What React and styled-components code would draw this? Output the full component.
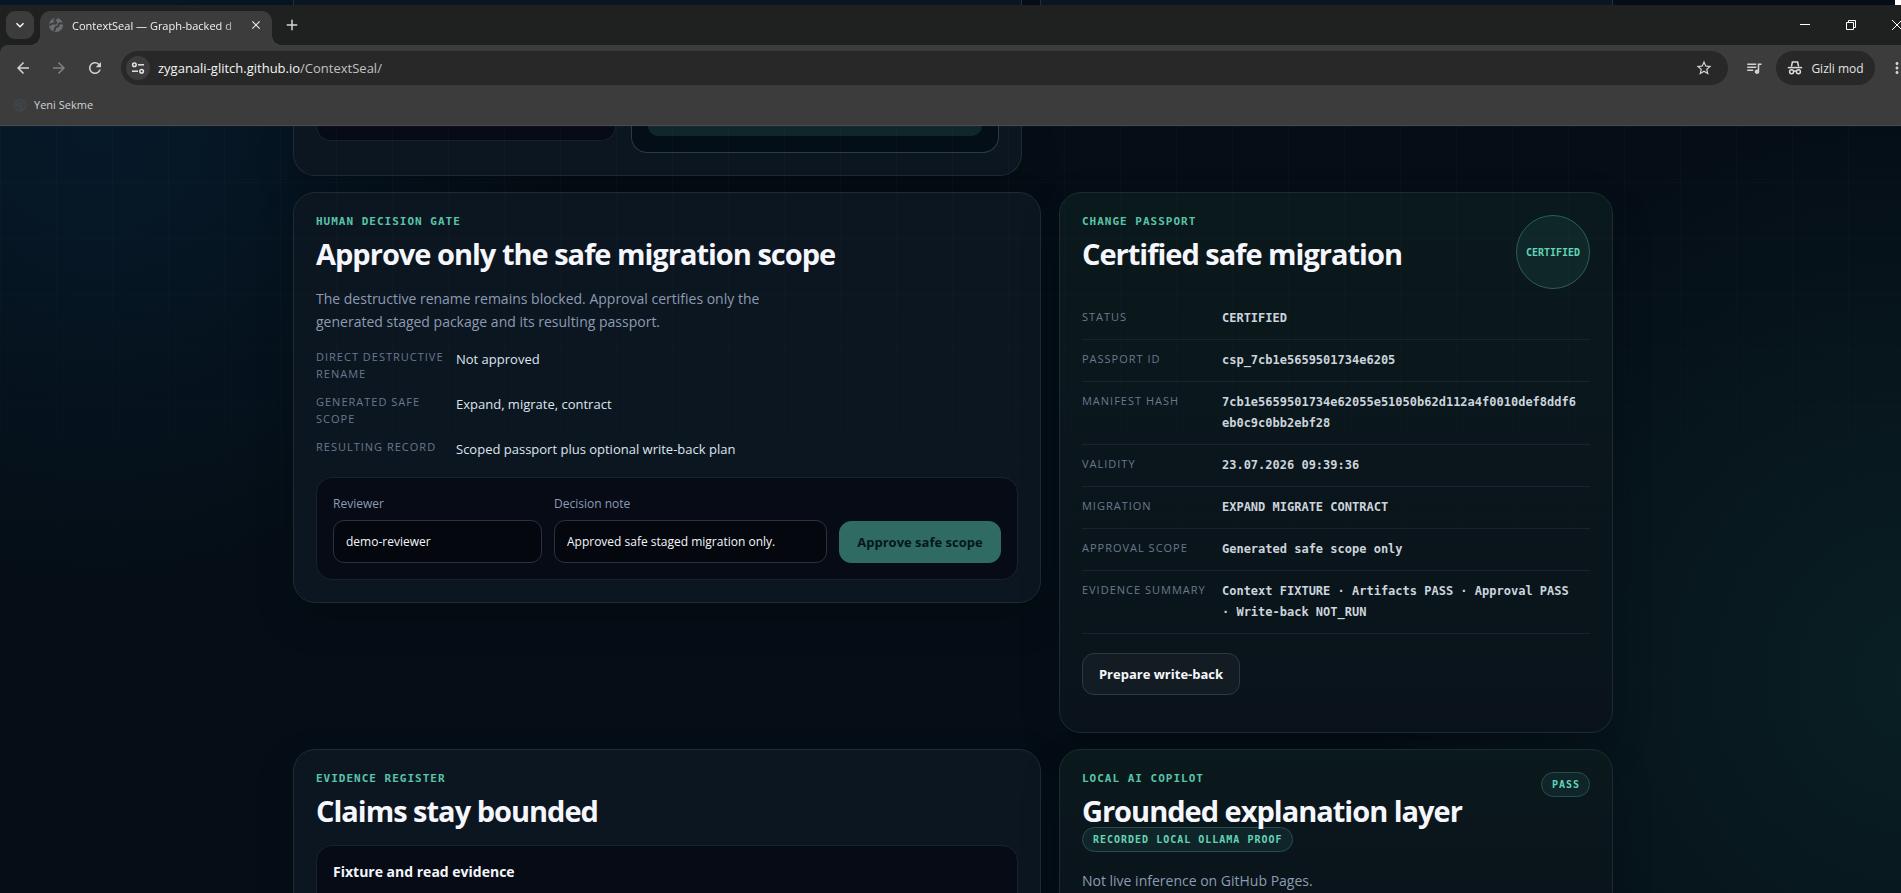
import styled, { createGlobalStyle, css } from 'styled-components';
import {
  MdAdd,
  MdArrowBack,
  MdArrowForward,
  MdClose,
  MdExpandMore,
  MdMoreVert,
  MdQueueMusic,
  MdRefresh,
  MdStarOutline,
} from 'react-icons/md';

const sans = "'Open Sans', 'Noto Sans', sans-serif";
const mono = "'DejaVu Sans Mono', 'Liberation Mono', monospace";

const decisionFacts = [
  ['Direct destructive rename', 'Not approved'],
  ['Generated safe scope', 'Expand, migrate, contract'],
  ['Resulting record', 'Scoped passport plus optional write-back plan'],
];

const passportFacts = [
  ['Status', 'CERTIFIED'],
  ['Passport ID', 'csp_7cb1e5659501734e6205'],
  ['Manifest hash', '7cb1e5659501734e62055e51050b62d112a4f0010def8ddf6eb0c9c0bb2ebf28'],
  ['Validity', '23.07.2026 09:39:36'],
  ['Migration', 'EXPAND MIGRATE CONTRACT'],
  ['Approval scope', 'Generated safe scope only'],
  ['Evidence summary', 'Context FIXTURE · Artifacts PASS · Approval PASS · Write-back NOT_RUN'],
];

function GlobeIcon() {
  return (
    <svg width='16' height='16' viewBox='0 0 16 16' aria-hidden='true'>
      <circle cx='8' cy='8' r='7' fill='#6a6e74' />
      <path
        d='M8.6 1.4 C6.4 2.4 5.4 3.6 7.4 4.6 C9 5.4 8.4 6.8 6.6 6.6 C4.6 6.4 3 6.4 2.2 8 M14 6.6 C12 5.6 10.4 6.6 10.6 8.2 C10.8 9.6 9.6 9.6 8.4 9.8 C6.8 10 7.4 12 6.2 13.8'
        fill='none'
        stroke='#3c3c3c'
        strokeWidth='2'
        strokeLinecap='round'
      />
    </svg>
  );
}

function TuneIcon() {
  return (
    <svg width='14' height='14' viewBox='0 0 14 14' fill='none' stroke='#e3e3e3' strokeWidth='1.5' aria-hidden='true'>
      <circle cx='3.4' cy='3.8' r='1.8' />
      <path d='M7 3.8h6' />
      <circle cx='10.6' cy='10.2' r='1.8' />
      <path d='M1 10.2h6' />
    </svg>
  );
}

function IncognitoIcon() {
  return (
    <svg width='16' height='16' viewBox='0 0 16 16' fill='none' stroke='#dcdcdc' strokeWidth='1.5' aria-hidden='true'>
      <path d='M4.4 6.6 5.4 2h5.2l1 4.6' />
      <path d='M.8 7.6h14.4' />
      <circle cx='4.6' cy='11.8' r='2' />
      <circle cx='11.4' cy='11.8' r='2' />
      <path d='M6.6 11.4q1.4-.8 2.8 0' />
    </svg>
  );
}

function ChromeMark() {
  return (
    <svg width='14' height='14' viewBox='0 0 14 14' fill='none' stroke='#3f454a' strokeWidth='2' aria-hidden='true'>
      <circle cx='7' cy='7' r='5.6' />
      <circle cx='7' cy='7' r='2' />
      <path d='M7 4.4h5M4.8 8.2 2.4 4.2M9.2 8.2 6.8 12.4' />
    </svg>
  );
}

function WindowIcon({ name }) {
  return (
    <svg width='12' height='12' viewBox='0 0 12 12' fill='none' stroke='#ffffff' aria-hidden='true'>
      {name === 'minimize' && <path d='M1 5.5h10' />}
      {name === 'restore' && <path d='M1.5 3.5h7v7h-7zM3.5 3.5v-2h7v7h-2' />}
      {name === 'close' && <path d='M1 1l10 10M11 1L1 11' />}
    </svg>
  );
}

function BrowserBar() {
  return (
    <BrowserHeader>
      <TabStrip>
        <TabSearch type='button' aria-label='Search tabs'>
          <MdExpandMore />
        </TabSearch>
        <Tab>
          <GlobeIcon />
          <TabTitle>ContextSeal — Graph-backed d</TabTitle>
          <TabClose type='button' aria-label='Close tab'>
            <MdClose />
          </TabClose>
        </Tab>
        <NewTab type='button' aria-label='New tab' $size={18}>
          <MdAdd />
        </NewTab>
        <WindowControls>
          {['minimize', 'restore', 'close'].map((name) => (
            <WindowButton key={name} type='button' aria-label={name}>
              <WindowIcon name={name} />
            </WindowButton>
          ))}
        </WindowControls>
      </TabStrip>
      <Toolbar>
        <BarIcon type='button' aria-label='Back' $size={18}>
          <MdArrowBack />
        </BarIcon>
        <BarIcon type='button' aria-label='Forward' $size={18} $dim>
          <MdArrowForward />
        </BarIcon>
        <BarIcon type='button' aria-label='Reload' $size={18}>
          <MdRefresh />
        </BarIcon>
        <AddressBar>
          <SiteInfo type='button' aria-label='Site information'>
            <TuneIcon />
          </SiteInfo>
          <Url href='#top'>
            zyganali-glitch.github.io<span>/ContextSeal/</span>
          </Url>
          <BarIcon type='button' aria-label='Bookmark' $size={18}>
            <MdStarOutline />
          </BarIcon>
        </AddressBar>
        <BarIcon type='button' aria-label='Media controls' $size={18}>
          <MdQueueMusic />
        </BarIcon>
        <ModeButton type='button'>
          <IncognitoIcon />
          Gizli mod
        </ModeButton>
        <BarIcon type='button' aria-label='Menu' $size={18}>
          <MdMoreVert />
        </BarIcon>
      </Toolbar>
      <BookmarkBar>
        <ChromeMark />
        <a href='#new'>Yeni Sekme</a>
      </BookmarkBar>
    </BrowserHeader>
  );
}

function CardTitle({ eyebrow, children }) {
  return (
    <div>
      <Eyebrow>{eyebrow}</Eyebrow>
      <Heading>{children}</Heading>
    </div>
  );
}

function DecisionCard() {
  return (
    <Card>
      <CardTitle eyebrow='Human decision gate'>Approve only the safe migration scope</CardTitle>
      <Lead>
        The destructive rename remains blocked. Approval certifies only the generated staged package
        and its resulting passport.
      </Lead>
      <DecisionList>
        {decisionFacts.map(([term, value]) => (
          <Fact key={term}>
            <dt>{term}</dt>
            <dd>{value}</dd>
          </Fact>
        ))}
      </DecisionList>
      <ApprovalForm onSubmit={(event) => event.preventDefault()}>
        <Field>
          <label htmlFor='reviewer'>Reviewer</label>
          <input id='reviewer' defaultValue='demo-reviewer' />
        </Field>
        <Field>
          <label htmlFor='note'>Decision note</label>
          <input id='note' defaultValue='Approved safe staged migration only.' />
        </Field>
        <Button $primary>Approve safe scope</Button>
      </ApprovalForm>
    </Card>
  );
}

function PassportCard() {
  return (
    <Card $tinted>
      <CardHead $tall>
        <CardTitle eyebrow='Change passport'>Certified safe migration</CardTitle>
        <Seal>CERTIFIED</Seal>
      </CardHead>
      <PassportList>
        {passportFacts.map(([term, value]) => (
          <Fact key={term} $ruled>
            <dt>{term}</dt>
            <dd>{value}</dd>
          </Fact>
        ))}
      </PassportList>
      <Actions>
        <Button type='button'>Prepare write-back</Button>
      </Actions>
    </Card>
  );
}

function App() {
  return (
    <>
      <GlobalStyle />
      <Desktop>
        <Backdrop>
          <PageColumn>
            <Columns $template='56fr 44fr'>
              <StripCard />
              <StripCard />
            </Columns>
          </PageColumn>
          <Corner />
        </Backdrop>
        <BrowserBar />
        <Page>
          <PageColumn>
            <Columns $template='56fr 44fr'>
              <DiffCard>
                <DiffPanel />
                <DiffPanel $safe>
                  <DiffBlock />
                </DiffPanel>
              </DiffCard>
            </Columns>
            <Columns $template='135fr 100fr'>
              <DecisionCard />
              <PassportCard />
            </Columns>
            <Columns $template='135fr 100fr'>
              <Card>
                <CardTitle eyebrow='Evidence register'>Claims stay bounded</CardTitle>
                <EvidencePanel>
                  <h3>Fixture and read evidence</h3>
                </EvidencePanel>
              </Card>
              <Card $tinted>
                <CardHead>
                  <div>
                    <CardTitle eyebrow='Local AI copilot'>Grounded explanation layer</CardTitle>
                    <Badge>RECORDED LOCAL OLLAMA PROOF</Badge>
                  </div>
                  <Badge>PASS</Badge>
                </CardHead>
                <Lead>Not live inference on GitHub Pages.</Lead>
              </Card>
            </Columns>
          </PageColumn>
        </Page>
      </Desktop>
    </>
  );
}

const GlobalStyle = createGlobalStyle`
  * {
    box-sizing: border-box;
  }
  body {
    margin: 0;
    background: #050e16;
    font-family: ${sans};
    color: #f4f6fb;
    overflow: hidden;
  }
  button, input {
    font-family: inherit;
    color: inherit;
  }
  h2, h3, p, dl, dd {
    margin: 0;
  }
`;

/* the maximised window runs a little past the right side of the viewport */
const Desktop = styled.div`
  width: calc(100% + 19px);
  height: 100vh;
  display: flex;
  flex-direction: column;
  overflow: hidden;
`;

const gridLines = css`
  background-image: linear-gradient(90deg, rgba(255, 255, 255, 0.018) 1px, transparent 1px),
    linear-gradient(rgba(255, 255, 255, 0.018) 1px, transparent 1px);
  background-size: 56px 56px;
`;

const Backdrop = styled.div`
  position: relative;
  flex: none;
  height: 5px;
  padding-right: 14px;
  overflow: hidden;
  background: linear-gradient(90deg, #061828, #050e17 40%);
`;

const Corner = styled.div`
  position: absolute;
  top: 0;
  right: 0;
  width: 25px;
  height: 5px;
  background: #ffffff;
`;

const StripCard = styled.div`
  height: 5px;
  border: solid #22303d;
  border-width: 0 1px;
  background: #0c1622;
`;

const BrowserHeader = styled.header`
  flex: none;
  background: #1f2120;
`;

const TabStrip = styled.div`
  height: 40px;
  padding-left: 6px;
  display: flex;
  align-items: center;
`;

const TabSearch = styled.button`
  width: 28px;
  height: 28px;
  margin-right: 6px;
  padding: 0;
  border: 0;
  border-radius: 9px;
  background: #3c3c3c;
  color: #ffffff;
  font-size: 16px;
  display: grid;
  place-items: center;
  svg {
    stroke: currentColor;
  }
`;

const Tab = styled.div`
  position: relative;
  align-self: flex-end;
  width: 232px;
  height: 34px;
  padding: 0 8px 6px;
  border-radius: 10px 10px 0 0;
  background: #3c3c3c;
  display: flex;
  align-items: center;
  gap: 8px;
  &::before,
  &::after {
    content: '';
    position: absolute;
    bottom: 0;
    width: 10px;
    height: 10px;
  }
  &::before {
    right: 100%;
    background: radial-gradient(circle at 0 0, transparent 10px, #3c3c3c 10px);
  }
  &::after {
    left: 100%;
    background: radial-gradient(circle at 100% 0, transparent 10px, #3c3c3c 10px);
  }
`;

const TabTitle = styled.span`
  flex: 1;
  white-space: nowrap;
  font-size: 11px;
  color: #f1f1f1;
  mask-image: linear-gradient(90deg, #000 88%, transparent 106%);
`;

const TabClose = styled.button`
  width: 16px;
  height: 16px;
  padding: 0;
  border: 0;
  background: none;
  color: #e6e6e6;
  font-size: 14px;
  display: grid;
  place-items: center;
`;

const BarIcon = styled.button`
  flex: none;
  width: 36px;
  height: 34px;
  padding: 0;
  border: 0;
  background: none;
  display: grid;
  place-items: center;
  font-size: ${({ $size }) => $size}px;
  color: ${({ $dim }) => ($dim ? '#818181' : '#d3d3d3')};
`;

const NewTab = styled(BarIcon)`
  margin-left: 2px;
`;

const WindowControls = styled.div`
  margin-left: auto;
  display: flex;
`;

const WindowButton = styled.button`
  width: 46px;
  height: 40px;
  padding: 0;
  border: 0;
  background: none;
  display: grid;
  place-items: center;
`;

const Toolbar = styled.div`
  height: 46px;
  padding: 0 5px;
  border-radius: 8px 0 0 0;
  background: #3c3c3c;
  display: flex;
  align-items: center;
`;

const AddressBar = styled.div`
  flex: 1;
  height: 34px;
  margin: 0 8px;
  padding: 0 6px 0 5px;
  border-radius: 17px;
  background: #282828;
  display: flex;
  align-items: center;
`;

const SiteInfo = styled.button`
  width: 24px;
  height: 24px;
  margin-right: 8px;
  padding: 0;
  border: 0;
  border-radius: 50%;
  background: #3c3c3c;
  display: grid;
  place-items: center;
`;

const Url = styled.a`
  flex: 1;
  font-size: 13px;
  text-decoration: none;
  color: #f4f4f4;
  span {
    color: #c2c2c2;
  }
`;

const ModeButton = styled.button`
  flex: none;
  width: 99px;
  height: 34px;
  margin: 0 4px;
  padding: 0;
  border: 0;
  border-radius: 17px;
  background: #282828;
  color: #e3e3e3;
  font-size: 12px;
  display: flex;
  align-items: center;
  justify-content: center;
  gap: 8px;
`;

const BookmarkBar = styled.nav`
  height: 35px;
  padding: 0 13px 7px;
  border-bottom: 1px solid #4b4b4b;
  background: #3c3c3c;
  display: flex;
  align-items: center;
  gap: 7px;
  a {
    font-size: 11px;
    color: #d0d3d6;
    text-decoration: none;
  }
`;

const Page = styled.main`
  position: relative;
  flex: 1;
  min-height: 0;
  padding-right: 14px;
  overflow: hidden;
  background: radial-gradient(circle at 5% 0, rgba(8, 42, 70, 0.4), transparent 460px),
    radial-gradient(circle at 100% 72%, rgba(16, 62, 60, 0.36), transparent 560px), #050e16;
  &::after {
    content: '';
    position: absolute;
    inset: 0;
    pointer-events: none;
    ${gridLines}
    mask-image: linear-gradient(#000, transparent 80%);
  }
`;

const PageColumn = styled.div`
  max-width: 1320px;
  margin: 0 auto;
  display: flex;
  flex-direction: column;
  gap: 16px;
`;

const Columns = styled.div`
  display: grid;
  grid-template-columns: ${({ $template }) => $template};
  align-items: start;
  column-gap: 18px;
`;

const Card = styled.section`
  padding: 22px;
  border: 1px solid ${({ $tinted }) => ($tinted ? '#1c2c32' : '#1e2b37')};
  border-radius: 22px;
  background: ${({ $tinted }) => ($tinted ? 'linear-gradient(#0a191c, #0a131b)' : '#0c1621')};
  box-shadow: 0 16px 40px rgba(0, 0, 0, 0.2);
`;

const DiffCard = styled(Card)`
  height: 50px;
  padding-top: 0;
  border-top: 0;
  border-radius: 0 0 22px 22px;
  display: grid;
  grid-template-columns: 300fr 368fr;
  align-items: start;
  gap: 15px;
`;

const DiffPanel = styled.div`
  height: ${({ $safe }) => ($safe ? 27 : 15)}px;
  padding: 0 16px;
  border: 1px solid ${({ $safe }) => ($safe ? '#2a3a46' : '#18222f')};
  border-top: 0;
  border-radius: 0 0 16px 16px;
  background: ${({ $safe }) => ($safe ? '#040e17' : '#060b16')};
`;

const DiffBlock = styled.div`
  height: 10px;
  border-radius: 0 0 10px 10px;
  background: #102629;
`;

const CardHead = styled.div`
  min-height: ${({ $tall }) => ($tall ? 74 : 0)}px;
  display: flex;
  justify-content: space-between;
  align-items: flex-start;
`;

const Eyebrow = styled.p`
  margin-bottom: 9px;
  font-family: ${mono};
  font-weight: 700;
  font-size: 11px;
  line-height: 14px;
  letter-spacing: 1px;
  text-transform: uppercase;
  color: #58c4a8;
`;

const Heading = styled.h2`
  font-size: 29px;
  font-weight: 700;
  line-height: 32px;
  letter-spacing: -1px;
  color: #f6f7fc;
`;

const Lead = styled.p`
  max-width: 470px;
  margin-top: 17px;
  font-size: 14px;
  line-height: 23px;
  color: #8d9bb2;
`;

const Fact = styled.div`
  display: grid;
  grid-template-columns: 128px 1fr;
  column-gap: 12px;
  dt {
    font-size: 11px;
    line-height: 17px;
    letter-spacing: 1px;
    text-transform: uppercase;
    color: #6a788d;
  }
  dd {
    font-size: 13px;
    font-weight: 500;
    line-height: 22px;
    color: #dde5ee;
  }
  ${({ $ruled }) =>
    $ruled &&
    css`
      padding: 10px 0;
      border-bottom: 1px solid #17242b;
      dd {
        padding-right: 10px;
        font-family: ${mono};
        font-size: 12px;
        font-weight: 700;
        line-height: 21px;
        color: #ccd4dd;
        overflow-wrap: anywhere;
      }
    `}
`;

const DecisionList = styled.dl`
  margin-top: 15px;
  display: grid;
  gap: 11px;
`;

const PassportList = styled.dl`
  margin-top: 9px;
`;

const ApprovalForm = styled.form`
  margin-top: 17px;
  padding: 16px;
  border: 1px solid #18222f;
  border-radius: 16px;
  background: #060b16;
  display: grid;
  grid-template-columns: 209fr 273fr 162px;
  align-items: end;
  gap: 12px;
`;

const Field = styled.div`
  display: grid;
  gap: 6px;
  min-width: 0;
  label {
    font-size: 12px;
    line-height: 20px;
    color: #8d9bb2;
  }
  input {
    width: 100%;
    height: 43px;
    padding: 0 12px;
    border: 1px solid #29323f;
    border-radius: 11px;
    background: #04070e;
    font-size: 12px;
    font-weight: 500;
    color: #f4f6fb;
  }
`;

const Button = styled.button`
  height: 42px;
  padding: 0 16px;
  border: 1px solid ${({ $primary }) => ($primary ? '#2f6b62' : '#2d383f')};
  border-radius: 12px;
  background: ${({ $primary }) => ($primary ? '#2f6b62' : '#131c23')};
  color: ${({ $primary }) => ($primary ? '#04171a' : '#f6f7fc')};
  font-size: 13px;
  font-weight: 700;
  white-space: nowrap;
`;

const Actions = styled.div`
  margin: 19px 0 15px;
  display: flex;
`;

const Seal = styled.div`
  flex: none;
  width: 74px;
  height: 74px;
  border: 1px solid #2a5f56;
  border-radius: 50%;
  background: #10272a;
  display: grid;
  place-items: center;
  font-family: ${mono};
  font-size: 10px;
  font-weight: 700;
  color: #63d5b5;
`;

const Badge = styled.span`
  display: block;
  width: fit-content;
  padding: 0 9px 0 10px;
  border: 1px solid #23504c;
  border-radius: 13px;
  background: #10252a;
  font-family: ${mono};
  font-size: 10px;
  font-weight: 700;
  line-height: 23px;
  letter-spacing: 1px;
  color: #63d5b5;
`;

const EvidencePanel = styled.div`
  height: 120px;
  margin-top: 18px;
  padding: 16px;
  border: 1px solid #18222f;
  border-radius: 16px;
  background: #060b16;
  h3 {
    font-size: 14px;
    line-height: 20px;
    font-weight: 700;
  }
`;

export default App;
